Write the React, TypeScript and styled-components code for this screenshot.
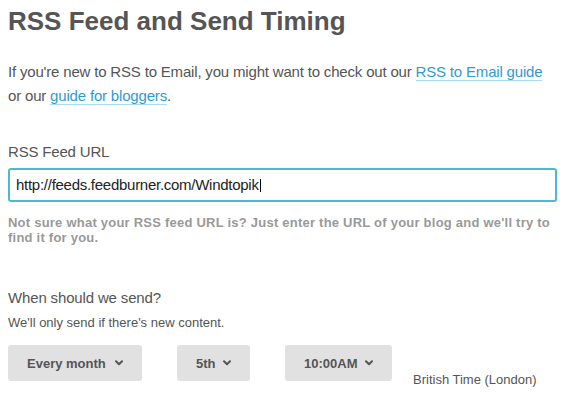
import React from "react";
import styled, { createGlobalStyle } from "styled-components";

const GlobalStyle = createGlobalStyle`
  html, body {
    margin: 0;
    padding: 0;
    background: #ffffff;
  }
  body {
    font-family: "Liberation Sans", Arial, Helvetica, sans-serif;
    color: #555555;
  }
`;

const Page = styled.div`
  width: 549px;
  padding: 0 8px;
`;

const Title = styled.h1`
  margin: 5px 0 0;
  font-size: 26px;
  line-height: 32px;
  font-weight: bold;
  color: #555555;
`;

const Intro = styled.p`
  margin: 23px 0 0;
  font-size: 15px;
  line-height: 24px;
  letter-spacing: -0.18px;
  color: #555555;
`;

const GuideLink = styled.a`
  color: #2f9bcf;
  text-decoration: none;
  border-bottom: 1px solid #a9dcf4;
`;

const FieldLabel = styled.div`
  margin-top: 34px;
  font-size: 15px;
  line-height: 20px;
  letter-spacing: -0.18px;
  color: #555555;
`;

const UrlField = styled.div`
  margin-top: 6px;
  box-sizing: border-box;
  height: 34px;
  border: 2px solid #4db8d4;
  border-radius: 3px;
  padding: 0 6px;
  display: flex;
  align-items: center;
  font-size: 15px;
  line-height: 30px;
  letter-spacing: -0.27px;
  color: #222222;
`;

const Caret = styled.span`
  display: inline-block;
  width: 1px;
  height: 13px;
  background: #000000;
  margin-left: 1px;
`;

const Hint = styled.p`
  margin: 13px 0 0;
  font-size: 13px;
  line-height: 15px;
  font-weight: bold;
  letter-spacing: 0.23px;
  color: #999999;
`;

const Question = styled.div`
  margin-top: 43px;
  font-size: 15px;
  line-height: 20px;
  letter-spacing: -0.15px;
  color: #555555;
`;

const Note = styled.div`
  margin-top: 7px;
  font-size: 13px;
  line-height: 16px;
  color: #555555;
`;

const ScheduleRow = styled.div`
  margin-top: 14px;
  display: flex;
  align-items: flex-start;
  gap: 21px;
`;

const Selects = styled.div`
  display: flex;
  gap: 35px;
`;

const SelectButton = styled.button<{ $w: number }>`
  box-sizing: border-box;
  width: ${(p) => p.$w}px;
  height: 36px;
  padding: 0 19px;
  border: none;
  border-radius: 3px;
  background: #e1e1e1;
  display: flex;
  align-items: center;
  justify-content: space-between;
  font-family: "Liberation Sans", Arial, Helvetica, sans-serif;
  font-size: 13px;
  font-weight: bold;
  color: #555555;
  cursor: pointer;
`;

const Zone = styled.span`
  margin-top: 27px;
  font-size: 13px;
  line-height: 16px;
  color: #555555;
`;

const Chevron = () => (
  <svg width="8" height="6" viewBox="0 0 8 6" aria-hidden="true">
    <polyline
      points="1,1.2 4,4.2 7,1.2"
      fill="none"
      stroke="#555555"
      strokeWidth="2"
      strokeLinecap="round"
      strokeLinejoin="round"
    />
  </svg>
);

export default function App() {
  return (
    <>
      <GlobalStyle />
      <Page>
        <Title>RSS Feed and Send Timing</Title>
        <Intro>
          If you're new to RSS to Email, you might want to check out our{" "}
          <GuideLink href="#">RSS to Email guide</GuideLink> or our{" "}
          <GuideLink href="#">guide for bloggers</GuideLink>.
        </Intro>
        <FieldLabel>RSS Feed URL</FieldLabel>
        <UrlField>
          <span>http://feeds.feedburner.com/Windtopik</span>
          <Caret />
        </UrlField>
        <Hint>
          Not sure what your RSS feed URL is? Just enter the URL of your blog
          and we'll try to find it for you.
        </Hint>
        <Question>When should we send?</Question>
        <Note>We'll only send if there's new content.</Note>
        <ScheduleRow>
          <Selects>
            <SelectButton $w={134}>
              Every month <Chevron />
            </SelectButton>
            <SelectButton $w={73}>
              5th <Chevron />
            </SelectButton>
            <SelectButton $w={107}>
              10:00AM <Chevron />
            </SelectButton>
          </Selects>
          <Zone>British Time (London)</Zone>
        </ScheduleRow>
      </Page>
    </>
  );
}
